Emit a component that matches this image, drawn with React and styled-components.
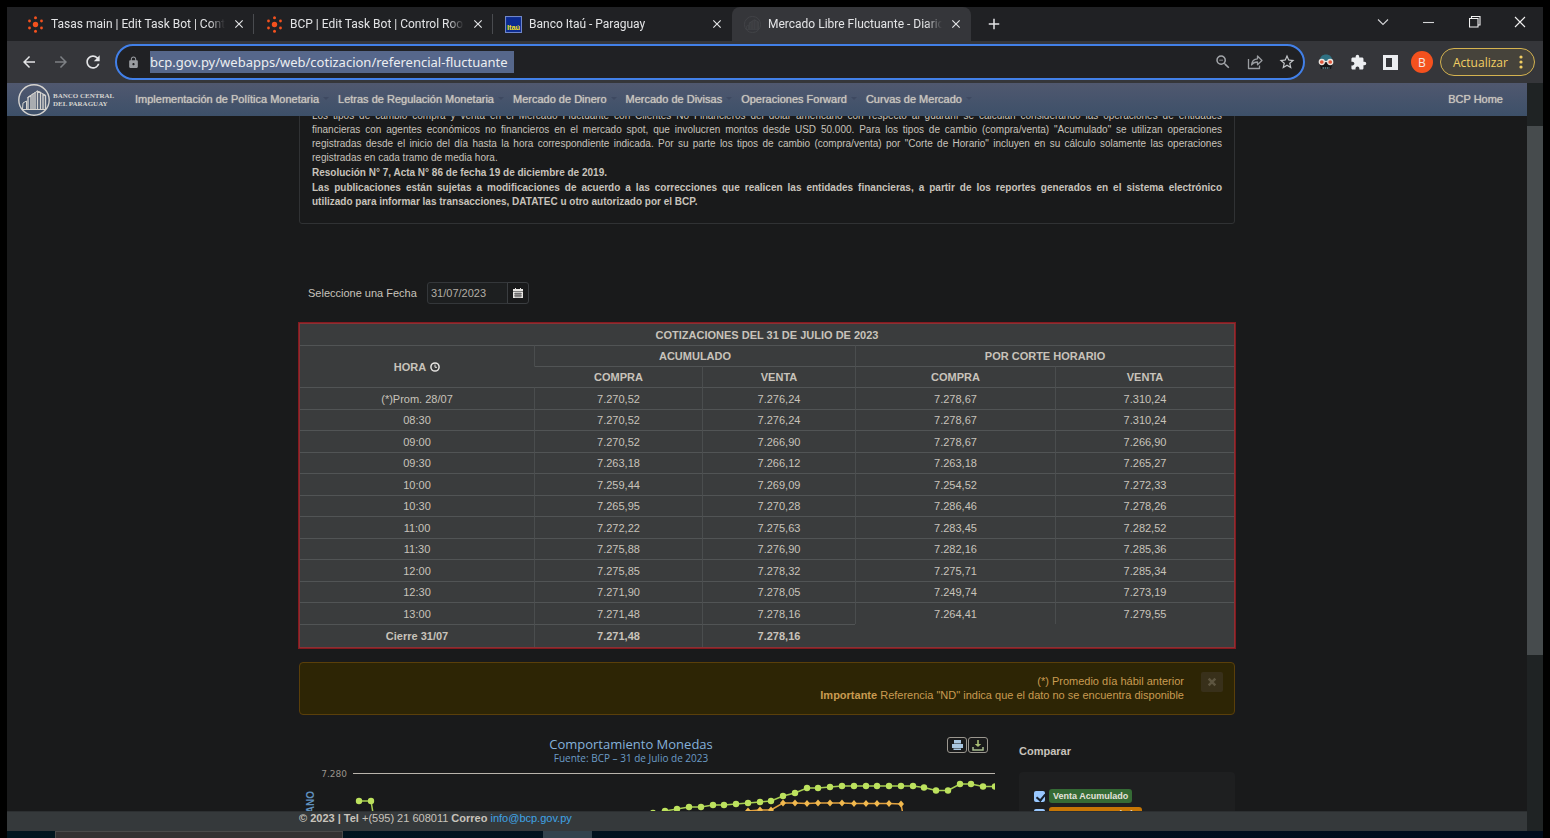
import React from "react";
import styled, { createGlobalStyle, css } from "styled-components";
import {
  MdArrowBack,
  MdArrowForward,
  MdRefresh,
  MdLock,
  MdZoomOut,
  MdStarBorder,
  MdExtension,
  MdClose,
  MdAdd,
} from "react-icons/md";

const uiFont = `"Open Sans", "Noto Sans", sans-serif`;
const urlFont = `"Noto Sans", "Open Sans", sans-serif`;
const tabFont = `Roboto, "Open Sans", sans-serif`;
const pageFont = `"Liberation Sans", Arial, sans-serif`;
const chartFont = `"Open Sans", "DejaVu Sans", sans-serif`;

const GlobalStyle = createGlobalStyle`
  * { box-sizing: border-box; }
  body { margin: 0; background: #000; font-family: ${pageFont}; font-size: 11px; color: #c8c3bb; }
  button { font: inherit; color: inherit; background: none; border: 0; padding: 0; cursor: pointer; }
  svg { display: block; flex: none; }
  p, h2, h3 { margin: 0; }
`;

/* ---------- browser window ---------- */

const Window = styled.div`
  display: flex;
  flex-direction: column;
  height: 100vh;
  padding: 7px 7px 0;
  overflow: hidden;
`;

const TabStrip = styled.div`
  display: flex;
  flex: none;
  height: 34px;
  padding-left: 8px;
  background: #202124;
  font-family: ${tabFont};
  font-size: 12px;
  color: #e3e4e6;
`;

const Tab = styled.div`
  display: flex;
  align-items: center;
  flex: 0 1 239px;
  min-width: 0;
  padding: 0 8px 0 12px;
  gap: 7px;
  ${(p) =>
    p.$active &&
    css`
      background: #35363a;
      border-radius: 8px 8px 0 0;
    `}
`;

const TabDivider = styled.span`
  align-self: center;
  width: 1px;
  height: 20px;
  margin-left: -1px;
  background: #494b4f;
`;

const TabTitle = styled.span`
  flex: 1;
  overflow: hidden;
  white-space: nowrap;
  mask-image: linear-gradient(to right, #000 calc(100% - 16px), transparent);
`;

const IconButton = styled.button`
  display: flex;
  align-items: center;
  justify-content: center;
  flex: none;
  width: ${(p) => p.$w || 16}px;
  color: ${(p) => p.$color || "#e3e4e6"};
`;

const WindowButtons = styled.div`
  display: flex;
  margin-left: auto;
  padding-bottom: 4px;
`;

const Toolbar = styled.div`
  display: flex;
  align-items: center;
  flex: none;
  height: 42px;
  padding: 0 8px 0 6px;
  background: #35363a;
  font-family: ${uiFont};
`;

const Omnibox = styled.div`
  display: flex;
  align-items: center;
  flex: 1;
  height: 36px;
  margin: 0 5px 0 6px;
  padding: 0 0 0 10px;
  background: #202124;
  border: 2px solid #4280e8;
  border-radius: 18px;
`;

const UrlInput = styled.input`
  width: 364px;
  height: 22px;
  margin: 0 auto 0 10px;
  padding: 0;
  border: 0;
  outline: 0;
  background: #56678b;
  color: #eceef1;
  font-family: ${urlFont};
  font-size: 13px;
`;

const Avatar = styled.button`
  width: 22px;
  height: 22px;
  margin: 0 7px 0 5px;
  border-radius: 50%;
  background: #f4511e;
  color: #f5e6e0;
  font-size: 12px;
`;

const UpdateButton = styled.button`
  display: flex;
  align-items: center;
  justify-content: space-between;
  width: 95px;
  height: 28px;
  padding: 0 11px 0 12px;
  border: 1px solid #d5b350;
  border-radius: 14px;
  background: #46433b;
  color: #f3cf63;
  font-size: 12px;
`;

/* ---------- web page ---------- */

const Viewport = styled.div`
  display: flex;
  flex: 1;
  min-height: 0;
`;

const Page = styled.div`
  display: flex;
  flex-direction: column;
  flex: 1;
  min-width: 0;
  background: #191a1b;
`;

const ScrollTrack = styled.div`
  flex: none;
  width: 16px;
  padding-top: 43px;
  background: #1f2324;
`;

const ScrollThumb = styled.div`
  height: 75%;
  background: #464b4d;
`;

const Navbar = styled.nav`
  display: flex;
  align-items: center;
  flex: none;
  height: 33px;
  padding: 0 24px 0 11px;
  background: linear-gradient(#50586f, #3d5069);
`;

const Brand = styled.a`
  display: flex;
  align-items: center;
  gap: 3px;
  width: 101px;
  margin-right: 16px;
  color: #d5d3cf;
  text-decoration: none;
  font-family: "Liberation Serif", serif;
  font-size: 7px;
  font-weight: bold;
  line-height: 8px;
  white-space: nowrap;
`;

const NavLink = styled.a`
  display: flex;
  align-items: center;
  gap: 4px;
  margin-right: 9px;
  padding-bottom: 2px;
  color: #c9c5be;
  text-decoration: none;
  text-shadow: 0 0 1px #c9c5be;
  white-space: nowrap;
  line-height: 14px;
  &:last-child { margin: 0 0 0 auto; }
`;

const Caret = styled.span`
  border: 3px solid transparent;
  border-top-color: #3e4961;
  border-bottom: 0;
`;

const Content = styled.main`
  flex: 1;
  min-height: 0;
  overflow: hidden;
`;

const Container = styled.div`
  width: 100%;
  max-width: 936px;
  margin: 0 auto;
`;

const Notice = styled.section`
  display: flex;
  flex-direction: column;
  gap: 1px;
  margin-top: -19px;
  padding: 11px 12px 14px;
  border: 1px solid #303234;
  border-radius: 3px;
  font-size: 10px;
  line-height: 14px;
`;

const NoticeLine = styled.span`
  display: block;
  text-align: justify;
  text-align-last: ${(p) => (p.$last ? "start" : "justify")};
`;

const DateRow = styled.div`
  display: flex;
  align-items: center;
  margin: 58px 0 19px;
  padding-left: 9px;
`;

const DateLabel = styled.label`
  width: 119px;
`;

const DateInput = styled.input`
  width: 81px;
  height: 22px;
  padding: 0 3px;
  border: 1px solid #34373a;
  border-radius: 3px 0 0 3px;
  background: #1d1f20;
  color: #b3aea6;
  font: inherit;
`;

const DateButton = styled(IconButton)`
  width: 22px;
  height: 22px;
  margin-left: -1px;
  border: 1px solid #3a3d40;
  border-radius: 0 3px 3px 0;
`;

const RatesTable = styled.table`
  width: 100%;
  table-layout: fixed;
  border-collapse: separate;
  border-spacing: 0;
  border: 1px solid #8a3134;
  outline: 1px solid #86191f;
  background: #3a3c3d;
  text-align: center;
  thead tr { height: 21px; }
  tbody tr { height: 22px; }
  tbody tr:nth-child(even) { height: 21px; }
  tfoot tr { height: 23px; }
  th, td {
    padding: 0;
    border-top: 1px solid #515455;
    border-left: 1px solid #4a4d4e;
    line-height: 14px;
  }
  th:first-child, td:first-child { border-left: 0; }
  thead tr:first-child th { border-top: 0; }
  thead tr:nth-child(3) th:first-child { border-left: 1px solid #3a3c3d; }
`;

const Col = styled.col`
  width: ${(p) => p.$w}px;
`;

const HourHead = styled.span`
  display: inline-flex;
  align-items: center;
  gap: 4px;
`;

const EmptyCell = styled.td`
  &&& { border-color: transparent; }
`;

const Alert = styled.div`
  display: flex;
  align-items: flex-start;
  justify-content: flex-end;
  gap: 17px;
  margin-top: 14px;
  padding: 9px 11px 11px;
  min-height: 53px;
  border: 1px solid #5a3f0a;
  border-radius: 4px;
  background: #2d2505;
  color: #c99b51;
  line-height: 14px;
  text-align: right;
`;

const AlertText = styled.div`
  padding-top: 2px;
`;

const AlertClose = styled(IconButton)`
  width: 22px;
  height: 20px;
  border-radius: 2px;
  background: #38301a;
`;

const ChartRow = styled.div`
  display: flex;
  align-items: flex-start;
  gap: 24px;
`;

const Chart = styled.section`
  flex: 1;
  min-width: 0;
  padding-top: 22px;
  font-family: ${chartFont};
`;

const ChartHead = styled.div`
  display: flex;
  align-items: flex-start;
  padding: 0 7px 0 248px;
  text-align: center;
  color: #85b1da;
`;

const ChartHeading = styled.div`
  width: 168px;
  white-space: nowrap;
`;

const ChartTitle = styled.h2`
  font-size: 13px;
  font-weight: normal;
  line-height: 15px;
`;

const ChartSubtitle = styled.p`
  font-size: 10px;
  line-height: 13px;
  color: #6c9cc6;
`;

const ChartTools = styled.div`
  display: flex;
  gap: 1px;
  margin-left: auto;
`;

const ChartTool = styled(IconButton)`
  width: 20px;
  height: 16px;
  border: 1px solid #9b978f;
  border-radius: 3px;
`;

const Compare = styled.section`
  width: 216px;
  padding-top: 29px;
`;

const CompareTitle = styled.h3`
  font-size: 11px;
  line-height: 14px;
  margin-bottom: 14px;
`;

const ComparePanel = styled.div`
  display: flex;
  flex-direction: column;
  gap: 4px;
  padding: 17px 15px;
  border-radius: 4px;
  background: #1e1f20;
`;

const CompareOption = styled.label`
  display: flex;
  align-items: center;
  gap: 4px;
`;

const Check = styled.input`
  appearance: none;
  position: relative;
  width: 11px;
  height: 11px;
  margin: 0;
  border-radius: 2px;
  background: #99c8ff;
  &:checked::after {
    content: "";
    position: absolute;
    left: 4px;
    top: 1px;
    width: 4px;
    height: 7px;
    border: solid #16202c;
    border-width: 0 2px 2px 0;
    transform: rotate(40deg);
  }
`;

const Badge = styled.span`
  padding: 0 4px;
  border-radius: 3px;
  background: ${(p) => p.$bg};
  color: #e5e2dc;
  font-size: 9px;
  font-weight: bold;
  line-height: 14px;
`;

const Footer = styled.footer`
  flex: none;
  height: 20px;
  border-top: 1px solid #2c2f31;
  background: #35393b;
  line-height: 12px;
  a { color: #3fa4e6; text-decoration: none; }
`;

const Taskbar = styled.div`
  display: flex;
  flex: none;
  height: 7px;
  background: linear-gradient(to right, #01161f, #000c1c);
`;

const TaskSearch = styled.div`
  width: 288px;
  margin-left: 48px;
  border: solid #4a4a4a;
  border-width: 1px 1px 0;
  background: #333132;
`;

const TaskItem = styled.div`
  width: 49px;
  margin-left: 200px;
  background: #33434d;
`;

/* ---------- icons ---------- */

const BotIcon = () => (
  <svg width="17" height="17" viewBox="0 0 17 17" fill="#f4511e">
    <circle cx="8.5" cy="8.5" r="2.7" />
    <circle cx="8.5" cy="1.8" r="1.5" />
    <circle cx="8.5" cy="15.2" r="1.5" />
    <circle cx="2.5" cy="5" r="1.4" />
    <circle cx="14.5" cy="5" r="1.4" />
    <circle cx="2.5" cy="12" r="1.4" />
    <circle cx="14.5" cy="12" r="1.4" />
  </svg>
);

const ItauIcon = () => (
  <svg width="17" height="17" viewBox="0 0 16 16">
    <rect x="0.5" y="0.5" width="15" height="15" fill="#0b2a8f" stroke="#6f86c8" />
    <text x="8" y="13" textAnchor="middle" fontFamily="Liberation Sans" fontWeight="bold" fontSize="7" fill="#f5e31b">
      Itaú
    </text>
  </svg>
);

const BuildingIcon = ({ size = 32, color = "#d5d3cf" }) => (
  <svg width={size} height={size} viewBox="0 0 32 32" fill="none" stroke={color}>
    <circle cx="16" cy="16" r="15.2" strokeWidth="1.4" />
    <path d="M4.500 25l.5-6 3.500-2V25" strokeWidth="1" />
    <path d="M10 25V13.500l3-2V25M15 25V9.500M17 25V8.200M19.500 25V7.500l3 1V25M25 25V10.500l2.500 1.500V25" strokeWidth="1.400" />
    <path d="M9.500 13.500L19.500 7l8.500 4.500M4 25.500h24" strokeWidth="1" />
  </svg>
);

const ShareIcon = () => (
  <svg width="16" height="16" viewBox="0 0 16 16" fill="none" stroke="#9a9da1" strokeWidth="1.3" strokeLinejoin="round">
    <path d="M1.500 5v9.500h11v-3" />
    <path d="M4.500 11c.4-4 2.500-6 6-6.200V2l4.500 4.500-4.500 4.300V8c-2.800 0-4.600.8-6 3z" />
  </svg>
);

const GogglesIcon = () => (
  <svg width="16" height="16" viewBox="0 0 16 16">
    <path d="M1.500 7C2 2.500 4.500.5 8 .5s6 2 6.500 6.500z" fill="#2f7183" />
    <path d="M1.500 9h13l-1.500 6h-10z" fill="#141618" />
    <circle cx="3.800" cy="8" r="2.500" fill="#e2573a" stroke="#eae4de" strokeWidth="1.300" />
    <circle cx="12.200" cy="8" r="2.500" fill="#e2573a" stroke="#eae4de" strokeWidth="1.300" />
    <path d="M6 7.500h4" stroke="#eae4de" strokeWidth="1.200" />
    <path d="M4.500 14h7" stroke="#8ac1cb" strokeWidth="1.200" strokeDasharray="1.500 .7" />
  </svg>
);

const SidePanelIcon = () => (
  <svg width="15" height="15" viewBox="0 0 15 15">
    <path fill="#eceef1" fillRule="evenodd" d="M0 0h15v15H0zM3 3v9h6V3z" />
  </svg>
);

const DotsIcon = () => (
  <svg width="4" height="14" viewBox="0 0 4 14" fill="#f3cf63">
    <circle cx="2" cy="2" r="1.6" />
    <circle cx="2" cy="7" r="1.6" />
    <circle cx="2" cy="12" r="1.6" />
  </svg>
);

const LineIcon = ({ d, size = 12, stroke = "#d4d5d7", weight = 1.1 }) => (
  <svg width={size} height={size} viewBox="0 0 12 12" fill="none" stroke={stroke} strokeWidth={weight}>
    <path d={d} />
  </svg>
);

const CalendarIcon = () => (
  <svg width="10" height="10" viewBox="0 0 10 10">
    <path fill="#e8e6e3" d="M0 1h2V0h1v1h4V0h1v1h2v2H0zM0 3.500h10V10H0z" />
    <path stroke="#191a1b" strokeWidth=".6" d="M1 5.800h8M1 7.900h8M3 4.500v5M5 4.500v5M7 4.500v5" />
  </svg>
);

const ClockIcon = () => (
  <svg width="10" height="10" viewBox="0 0 10 10" fill="none" stroke="#e8e6e3">
    <circle cx="5" cy="5" r="4.100" strokeWidth="1.500" />
    <path d="M5 2.500V5.300H7" strokeWidth="1" />
  </svg>
);

const PrintIcon = () => (
  <svg width="12" height="12" viewBox="0 0 12 12" fill="#a9c6e0">
    <path d="M3 1h7v3.500H3zM1 5h11v4H1zM2.500 9.500h7.500V11H2.500z" />
  </svg>
);

const DownloadIcon = () => (
  <svg width="12" height="12" viewBox="0 0 12 12">
    <path d="M5.200 1h1.600v4h2.400L6 8 2.800 5h2.400z" fill="#a8be74" />
    <path d="M1 8v3h10V8" fill="none" stroke="#a8bd90" strokeWidth="1.500" />
  </svg>
);

/* ---------- data ---------- */

const tabs = [
  { title: "Tasas main | Edit Task Bot | Control Room", icon: <BotIcon />, divider: true },
  { title: "BCP | Edit Task Bot | Control Room", icon: <BotIcon />, divider: true },
  { title: "Banco Itaú - Paraguay", icon: <ItauIcon /> },
  { title: "Mercado Libre Fluctuante - Diario", icon: <BuildingIcon size={17} color="#46474b" />, active: true },
];

const navItems = [
  "Implementación de Política Monetaria",
  "Letras de Regulación Monetaria",
  "Mercado de Dinero",
  "Mercado de Divisas",
  "Operaciones Forward",
  "Curvas de Mercado",
];

const description = [
  "Los tipos de cambio compra y venta en el Mercado Fluctuante con Clientes No Financieros del dólar americano con respecto al guaraní se calculan considerando las operaciones de entidades",
  "financieras con agentes económicos no financieros en el mercado spot, que involucren montos desde USD 50.000. Para los tipos de cambio (compra/venta) \"Acumulado\" se utilizan operaciones",
  "registradas desde el inicio del día hasta la hora correspondiente indicada. Por su parte los tipos de cambio (compra/venta) por \"Corte de Horario\" incluyen en su cálculo solamente las operaciones",
  "registradas en cada tramo de media hora.",
];

const disclaimer = [
  "Las publicaciones están sujetas a modificaciones de acuerdo a las correcciones que realicen las entidades financieras, a partir de los reportes generados en el sistema electrónico",
  "utilizado para informar las transacciones, DATATEC u otro autorizado por el BCP.",
];

const rates = [
  ["(*)Prom. 28/07", "7.270,52", "7.276,24", "7.278,67", "7.310,24"],
  ["08:30", "7.270,52", "7.276,24", "7.278,67", "7.310,24"],
  ["09:00", "7.270,52", "7.266,90", "7.278,67", "7.266,90"],
  ["09:30", "7.263,18", "7.266,12", "7.263,18", "7.265,27"],
  ["10:00", "7.259,44", "7.269,09", "7.254,52", "7.272,33"],
  ["10:30", "7.265,95", "7.270,28", "7.286,46", "7.278,26"],
  ["11:00", "7.272,22", "7.275,63", "7.283,45", "7.282,52"],
  ["11:30", "7.275,88", "7.276,90", "7.282,16", "7.285,36"],
  ["12:00", "7.275,85", "7.278,32", "7.275,71", "7.285,34"],
  ["12:30", "7.271,90", "7.278,05", "7.249,74", "7.273,19"],
  ["13:00", "7.271,48", "7.278,16", "7.264,41", "7.279,55"],
];

/* Plot positions inside the chart drawing, whose origin is its top left corner. */
const sellPoints = [
  [60, 36], [72, 36], [76, 60], [342, 60], [354, 48], [366, 46], [378, 44], [390, 42], [402, 42], [414, 40],
  [425, 40], [437, 39], [449, 38], [461, 37], [472, 36], [484, 31], [496, 28], [508, 23], [519, 23],
  [531, 22], [543, 21], [555, 21], [567, 21], [578, 21], [590, 21], [602, 21], [614, 21], [625, 22.5],
  [637, 25.500], [649, 25.500], [661, 19], [672, 19], [684, 21.500], [696, 21.500],
];
const buyPoints = [
  [449, 46], [461, 45], [472, 45], [484, 38], [496, 38], [508, 38.500], [519, 38], [531, 38], [543, 38],
  [555, 38.500], [567, 38.500], [578, 38.500], [590, 38.500], [602, 39], [606, 60],
];
const toPath = (pts) => pts.map((p) => p.join(",")).join(" ");

const RatesChart = () => (
  <svg width="100%" height="100" aria-label="Comportamiento Monedas">
    <text x="48" y="12" textAnchor="end" fontFamily="DejaVu Sans" fontSize="9" fill="#98938b">7.280</text>
    <text transform="translate(15 26) rotate(-90)" textAnchor="end" fontFamily="Liberation Sans" fontSize="10" fontWeight="bold" fill="#5f8fbd">
      GUARANÍES POR DÓLAR AMERICANO
    </text>
    <path d="M54 8.500H697" stroke="#b9b4ac" />
    <polyline points={toPath(sellPoints)} fill="none" stroke="#a8cf52" strokeWidth="1.500" />
    <polyline points={toPath(buyPoints)} fill="none" stroke="#e0a040" strokeWidth="1.500" />
    {sellPoints.map(([x, y]) => (
      <circle key={x} cx={x} cy={y} r="3.200" fill="#bde25e" />
    ))}
    {buyPoints.map(([x, y]) => (
      <path key={x} d={`M${x} ${y - 3.5}l3 3.5l-3 3.5l-3 -3.5z`} fill="#f2b94e" />
    ))}
  </svg>
);

/* ---------- app ---------- */

const Justified = ({ lines }) =>
  lines.map((line, i) => (
    <NoticeLine key={line} $last={i === lines.length - 1}>{line}</NoticeLine>
  ));

export default function App() {
  return (
    <Window>
      <GlobalStyle />
      <TabStrip>
        {tabs.map((t) => (
          <React.Fragment key={t.title}>
            <Tab $active={t.active}>
              {t.icon}
              <TabTitle>{t.title}</TabTitle>
              <IconButton aria-label="Cerrar pestaña" $w={14}><MdClose size={14} /></IconButton>
            </Tab>
            {t.divider && <TabDivider />}
          </React.Fragment>
        ))}
        <IconButton aria-label="Nueva pestaña" $w={46}><MdAdd size={18} /></IconButton>
        <WindowButtons>
          <IconButton aria-label="Buscar pestañas" $w={46}><LineIcon d="M1 3.500l5 5 5-5" /></IconButton>
          <IconButton aria-label="Minimizar" $w={46}><LineIcon d="M0 6.500h11" /></IconButton>
          <IconButton aria-label="Restaurar" $w={45}><LineIcon d="M.5 2.500h8.500v8.500h-8.500zM2.500 2.500V.5h8.500v8.500H9" stroke="#f1f1f1" /></IconButton>
          <IconButton aria-label="Cerrar" $w={46}><LineIcon d="M1 1l10 10M11 1L1 11" stroke="#f1f1f1" /></IconButton>
        </WindowButtons>
      </TabStrip>

      <Toolbar>
        <IconButton aria-label="Atrás" $w={32}><MdArrowBack size={18} /></IconButton>
        <IconButton aria-label="Adelante" $w={32} $color="#7d8084"><MdArrowForward size={18} /></IconButton>
        <IconButton aria-label="Recargar" $w={32}><MdRefresh size={20} /></IconButton>
        <Omnibox>
          <MdLock size={13} color="#9a9da1" />
          <UrlInput aria-label="Dirección" defaultValue="bcp.gov.py/webapps/web/cotizacion/referencial-fluctuante" />
          <IconButton aria-label="Zoom" $w={32} $color="#a4a7ab"><MdZoomOut size={18} /></IconButton>
          <IconButton aria-label="Compartir" $w={32}><ShareIcon /></IconButton>
          <IconButton aria-label="Favorito" $w={32} $color="#c4c7ca"><MdStarBorder size={18} /></IconButton>
        </Omnibox>
        <IconButton aria-label="Extensión" $w={32}><GogglesIcon /></IconButton>
        <IconButton aria-label="Extensiones" $w={32} $color="#eceef1"><MdExtension size={17} /></IconButton>
        <IconButton aria-label="Panel lateral" $w={32}><SidePanelIcon /></IconButton>
        <Avatar aria-label="Perfil">B</Avatar>
        <UpdateButton>Actualizar<DotsIcon /></UpdateButton>
      </Toolbar>

      <Viewport>
        <Page>
          <Navbar>
            <Brand href="#inicio">
              <BuildingIcon />
              <span>BANCO CENTRAL<br />DEL PARAGUAY</span>
            </Brand>
            {navItems.map((n) => (
              <NavLink key={n} href="#menu">{n}<Caret /></NavLink>
            ))}
            <NavLink href="#bcp">BCP Home</NavLink>
          </Navbar>

          <Content>
            <Container>
              <Notice>
                <p><Justified lines={description} /></p>
                <p><b>Resolución N° 7, Acta N° 86 de fecha 19 de diciembre de 2019.</b></p>
                <p><b><Justified lines={disclaimer} /></b></p>
              </Notice>

              <DateRow>
                <DateLabel htmlFor="fecha">Seleccione una Fecha</DateLabel>
                <DateInput id="fecha" defaultValue="31/07/2023" />
                <DateButton aria-label="Abrir calendario"><CalendarIcon /></DateButton>
              </DateRow>

              <RatesTable>
                <colgroup>
                  <Col $w={234} /><Col $w={168} /><Col $w={153} /><Col $w={200} /><Col $w={179} />
                </colgroup>
                <thead>
                  <tr><th colSpan={5}>COTIZACIONES DEL 31 DE JULIO DE 2023</th></tr>
                  <tr>
                    <th rowSpan={2}><HourHead>HORA <ClockIcon /></HourHead></th>
                    <th colSpan={2}>ACUMULADO</th>
                    <th colSpan={2}>POR CORTE HORARIO</th>
                  </tr>
                  <tr><th>COMPRA</th><th>VENTA</th><th>COMPRA</th><th>VENTA</th></tr>
                </thead>
                <tbody>
                  {rates.map((r) => (
                    <tr key={r[0]}>{r.map((c, i) => <td key={i}>{c}</td>)}</tr>
                  ))}
                </tbody>
                <tfoot>
                  <tr>
                    <th>Cierre 31/07</th><th>7.271,48</th><th>7.278,16</th>
                    <EmptyCell colSpan={2} />
                  </tr>
                </tfoot>
              </RatesTable>

              <Alert role="note">
                <AlertText>
                  <p>(*) Promedio día hábil anterior</p>
                  <p><b>Importante</b> Referencia "ND" indica que el dato no se encuentra disponible</p>
                </AlertText>
                <AlertClose aria-label="Cerrar aviso"><LineIcon d="M2 2l8 8M10 2L2 10" size={10} stroke="#5d5540" weight={3} /></AlertClose>
              </Alert>

              <ChartRow>
                <Chart>
                  <ChartHead>
                    <ChartHeading>
                      <ChartTitle>Comportamiento Monedas</ChartTitle>
                      <ChartSubtitle>Fuente: BCP – 31 de Julio de 2023</ChartSubtitle>
                    </ChartHeading>
                    <ChartTools>
                      <ChartTool aria-label="Imprimir"><PrintIcon /></ChartTool>
                      <ChartTool aria-label="Descargar"><DownloadIcon /></ChartTool>
                    </ChartTools>
                  </ChartHead>
                  <RatesChart />
                </Chart>
                <Compare>
                  <CompareTitle>Comparar</CompareTitle>
                  <ComparePanel>
                    <CompareOption><Check type="checkbox" defaultChecked /><Badge $bg="#356b35">Venta Acumulado</Badge></CompareOption>
                    <CompareOption><Check type="checkbox" defaultChecked /><Badge $bg="#c67605">Compra Acumulado</Badge></CompareOption>
                  </ComparePanel>
                </Compare>
              </ChartRow>
            </Container>
          </Content>

          <Footer>
            <Container>
              <b>© 2023 | Tel</b> +(595) 21 608011 <b>Correo</b> <a href="mailto:info@bcp.gov.py">info@bcp.gov.py</a>
            </Container>
          </Footer>
        </Page>
        <ScrollTrack><ScrollThumb /></ScrollTrack>
      </Viewport>

      <Taskbar>
        <TaskSearch />
        <TaskItem />
      </Taskbar>
    </Window>
  );
}
